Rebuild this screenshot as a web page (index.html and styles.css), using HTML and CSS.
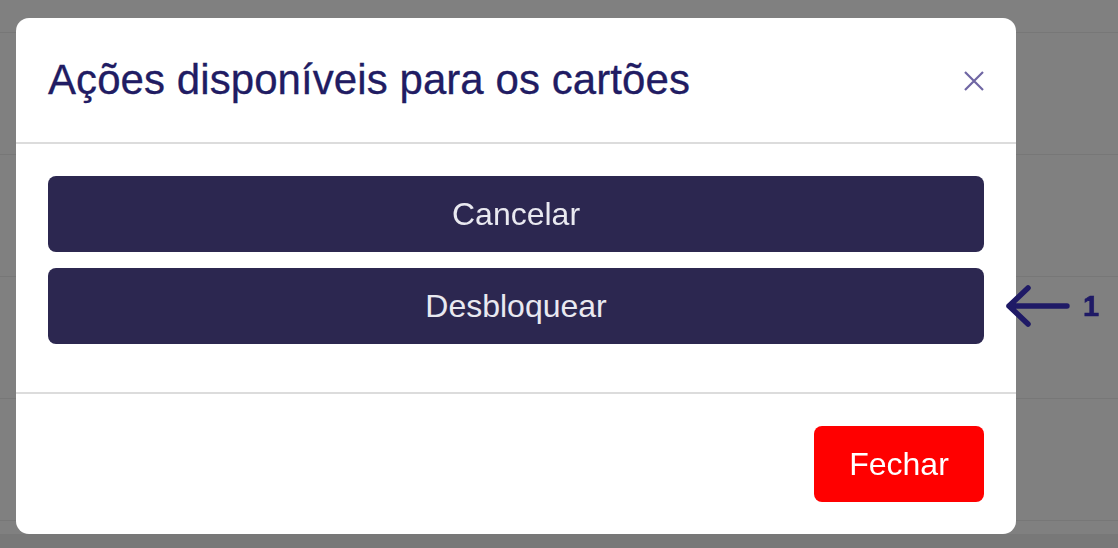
FILE: index.html
```html
<!DOCTYPE html>
<html lang="pt">
<head>
<meta charset="utf-8">
<title>Ações disponíveis</title>
<link rel="stylesheet" href="styles.css">
</head>
<body>
<div class="page">
  <div class="row row-first"></div>
  <div class="row"></div>
  <div class="row"></div>
  <div class="row"></div>
  <div class="row"></div>
</div>
<div class="backdrop">
  <div class="modal">
    <div class="modal-header">
      <h2 class="modal-title">Ações disponíveis para os cartões</h2>
      <button class="close" aria-label="Fechar">
        <svg width="20" height="20" viewBox="0 0 20 20"><path d="M1 1 L19 19 M19 1 L1 19" stroke="#6f66a3" stroke-width="2.2" fill="none"/></svg>
      </button>
    </div>
    <div class="modal-body">
      <button class="action">Cancelar</button>
      <div class="action-wrap">
        <button class="action">Desbloquear</button>
        <div class="marker">
          <svg width="66" height="48" viewBox="0 0 66 48"><path d="M4 24 H62 M23 6 L4 24 L23 42" stroke="#1f1a66" stroke-width="5.5" fill="none" stroke-linecap="round" stroke-linejoin="round"/></svg>
          <span class="marker-num">1</span>
        </div>
      </div>
    </div>
    <div class="modal-footer">
      <button class="close-btn">Fechar</button>
    </div>
  </div>
</div>
<div class="bottom-band"></div>
</body>
</html>
```

FILE: styles.css
```css
html, body {
  margin: 0;
  padding: 0;
}
body {
  background: #808080;
  font-family: "Liberation Sans", Arial, sans-serif;
  width: 1118px;
  height: 548px;
  overflow: hidden;
}
.page {
  display: flex;
  flex-direction: column;
}
.row {
  height: 121px;
  border-bottom: 1px solid #777777;
}
.row-first {
  height: 32px;
}
.bottom-band {
  position: fixed;
  left: 0;
  right: 0;
  bottom: 0;
  height: 14px;
  background: #787878;
}
.backdrop {
  position: fixed;
  inset: 0;
  padding: 18px 16px;
  z-index: 2;
}
.modal {
  width: 1000px;
  height: 516px;
  background: #fff;
  border-radius: 13px;
  display: flex;
  flex-direction: column;
}
.modal-header {
  height: 124px;
  padding: 0 32px;
  border-bottom: 2px solid #dcdcdc;
  display: flex;
  align-items: center;
  justify-content: space-between;
  box-sizing: content-box;
}
.modal-title {
  margin: 0;
  font-weight: 400;
  font-size: 42px;
  letter-spacing: 0.07px;
  color: #211c63;
  padding-top: 0;
  -webkit-text-stroke: 0.3px #211c63;
}
.close {
  background: none;
  border: 0;
  padding: 0;
  width: 20px;
  height: 20px;
  margin-right: 0;
  margin-top: 2px;
  display: flex;
}
.modal-body {
  padding: 32px 32px 48px;
  display: flex;
  flex-direction: column;
  gap: 16px;
  border-bottom: 2px solid #dcdcdc;
}
.action-wrap {
  position: relative;
  display: flex;
}
.action {
  width: 936px;
  height: 76px;
  border: 0;
  border-radius: 8px;
  background: #2c2750;
  color: #e9e9f0;
  font-family: "Liberation Sans", Arial, sans-serif;
  font-size: 32px;
  padding: 0;
}
.marker {
  position: absolute;
  left: 957px;
  top: 14px;
  display: flex;
  align-items: center;
  gap: 12px;
}
.marker-num {
  font-weight: 700;
  font-size: 29px;
  color: #1f1a66;
  -webkit-text-stroke: 0.6px #1f1a66;
}
.modal-footer {
  padding: 32px;
  display: flex;
  justify-content: flex-end;
}
.close-btn {
  width: 170px;
  height: 76px;
  border: 0;
  border-radius: 8px;
  background: #ff0000;
  color: #fff;
  font-family: "Liberation Sans", Arial, sans-serif;
  font-size: 32px;
  padding: 0;
}
```
